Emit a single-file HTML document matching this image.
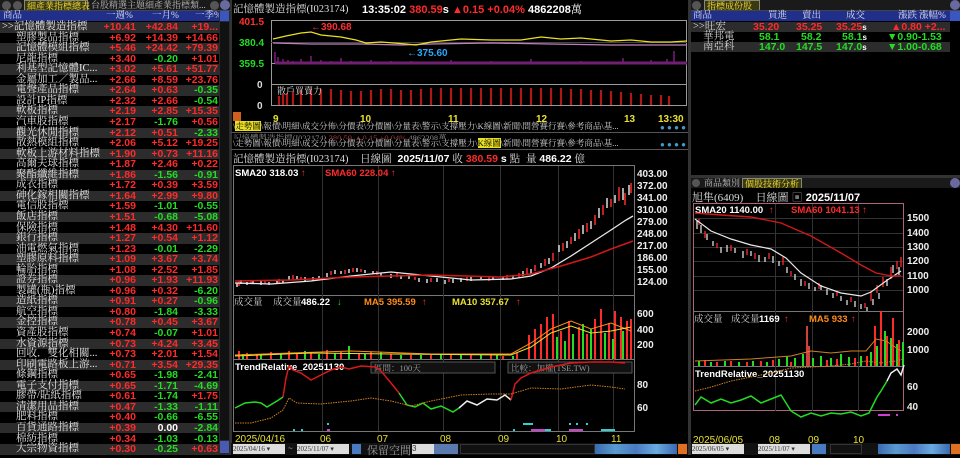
<!DOCTYPE html>
<html><head><meta charset="utf-8"><style>
*{margin:0;padding:0;box-sizing:border-box}
body{width:960px;height:455px;background:#000;overflow:hidden;position:relative;font-family:"Liberation Sans","Noto Serif CJK SC",sans-serif;color:#ddd}
.a{position:absolute;white-space:nowrap}
.r{color:#ff2a2a}.g{color:#22dd22}.w{color:#fff}.y{color:#e8e030}.o{color:#ff8c1a}
.b{font-weight:bold}
.cj{font-family:"Liberation Serif","Noto Serif CJK SC",serif}
.row{position:absolute;left:0;width:219px;height:10.55px;font-size:10.5px;line-height:10.55px}
.row.s{background:#2c2c2c}
.row span{position:absolute;top:0;white-space:nowrap}
.n{left:16px;color:#e8e8e8;font-family:"Liberation Serif","Noto Serif CJK SC",serif;font-size:10.5px}
.c1,.c2,.c3{font-weight:bold;text-align:right;width:60px}
.c1{left:76px}.c2{left:118px}.c3{left:158px}
.tab{position:absolute;height:10px;font-size:9px;line-height:10px;color:#bbb;white-space:nowrap;padding:0 2px}
.hdr{position:absolute;height:10px;background:#1f2f8a;font-size:9.5px;line-height:10px;color:#dde}
.tb{position:absolute;font-size:8.5px;line-height:9px;color:#ccc;font-family:"Liberation Serif","Noto Serif CJK SC",serif;white-space:nowrap}
</style></head><body>

<!-- LEFT PANEL -->
<div class="a" style="left:0;top:0;width:230px;height:11px;background:#1a1a1a;border-bottom:1px solid #444"></div>
<div class="a" style="left:2px;top:1px;width:9px;height:9px;border-radius:50%;background:#555"></div>
<div class="a" style="left:13px;top:1px;width:9px;height:9px;border-radius:50%;background:#555"></div>
<div class="tab cj" style="left:24px;top:0;width:64px;background:#3a3a10;color:#ffe640;border:1px solid #887;border-bottom:none">細產業指標總表</div>
<div class="tab cj" style="left:89px;top:0">台股精選主題</div>
<div class="tab cj" style="left:143px;top:0">細產業指標類...</div>
<div class="a" style="left:210px;top:1px;width:9px;height:9px;border-radius:50%;background:#555"></div>
<div class="a" style="left:220px;top:0px;width:10px;height:10px;border-radius:50%;background:#6a6aa0"></div>
<div class="hdr cj" style="left:0;top:11px;width:219px"><span class="a" style="left:3px">商品</span><span class="a" style="left:106px">一週%</span><span class="a" style="left:152px">一月%</span><span class="a" style="left:195px">一季%</span></div>
<div class="a" style="left:219px;top:11px;width:11px;height:444px;background:#2a2a2a"></div>
<div class="a" style="left:220px;top:11px;width:9px;height:10px;background:#3a56c0"></div>
<div class="a" style="left:220px;top:22px;width:9px;height:418px;background:#111"></div>
<div class="a" style="left:220px;top:441px;width:9px;height:12px;background:#4a5ab0"></div>

<div class="row s" style="top:22px"><span class="n" style="left:2px">&gt;&gt;記憶體製造指標</span><span class="c1 r">+10.41</span><span class="c2 r">+42.84</span><span class="c3 r">+19...</span></div>
<div class="row" style="top:32.5px"><span class="n">塑膠製品指標</span><span class="c1 r">+6.92</span><span class="c2 r">+14.39</span><span class="c3 r">+14.66</span></div>
<div class="row s" style="top:43.1px"><span class="n">記憶體模組指標</span><span class="c1 r">+5.46</span><span class="c2 r">+24.42</span><span class="c3 r">+79.39</span></div>
<div class="row" style="top:53.6px"><span class="n">尼龍指標</span><span class="c1 r">+3.40</span><span class="c2 g">-0.20</span><span class="c3 r">+1.01</span></div>
<div class="row s" style="top:64.2px"><span class="n">利基型記憶體IC...</span><span class="c1 r">+3.02</span><span class="c2 r">+5.61</span><span class="c3 r">+51.77</span></div>
<div class="row" style="top:74.7px"><span class="n">金屬加工／製品...</span><span class="c1 r">+2.66</span><span class="c2 r">+8.59</span><span class="c3 r">+23.76</span></div>
<div class="row s" style="top:85.3px"><span class="n">電聲產品指標</span><span class="c1 r">+2.64</span><span class="c2 r">+0.63</span><span class="c3 g">-0.35</span></div>
<div class="row" style="top:95.8px"><span class="n">設計IP指標</span><span class="c1 r">+2.32</span><span class="c2 r">+2.66</span><span class="c3 g">-0.54</span></div>
<div class="row s" style="top:106.4px"><span class="n">軟板指標</span><span class="c1 r">+2.19</span><span class="c2 r">+2.85</span><span class="c3 r">+15.35</span></div>
<div class="row" style="top:117px"><span class="n">汽車股指標</span><span class="c1 r">+2.17</span><span class="c2 g">-1.76</span><span class="c3 r">+0.56</span></div>
<div class="row s" style="top:127.5px"><span class="n">觀光休閒指標</span><span class="c1 r">+2.12</span><span class="c2 r">+0.51</span><span class="c3 g">-2.33</span></div>
<div class="row" style="top:138px"><span class="n">散熱模組指標</span><span class="c1 r">+2.06</span><span class="c2 r">+5.12</span><span class="c3 r">+19.25</span></div>
<div class="row s" style="top:148.6px"><span class="n">軟板上游材料指標</span><span class="c1 r">+1.90</span><span class="c2 r">+0.73</span><span class="c3 r">+11.16</span></div>
<div class="row" style="top:159.2px"><span class="n">高爾夫球指標</span><span class="c1 r">+1.87</span><span class="c2 r">+2.46</span><span class="c3 r">+0.22</span></div>
<div class="row s" style="top:169.7px"><span class="n">聚酯纖維指標</span><span class="c1 r">+1.86</span><span class="c2 g">-1.56</span><span class="c3 g">-0.91</span></div>
<div class="row" style="top:180.3px"><span class="n">成衣指標</span><span class="c1 r">+1.72</span><span class="c2 r">+0.39</span><span class="c3 r">+3.59</span></div>
<div class="row s" style="top:190.8px"><span class="n">砷化鎵相關指標</span><span class="c1 r">+1.64</span><span class="c2 r">+2.99</span><span class="c3 r">+9.80</span></div>
<div class="row" style="top:201.4px"><span class="n">電信股指標</span><span class="c1 r">+1.59</span><span class="c2 g">-1.01</span><span class="c3 g">-0.55</span></div>
<div class="row s" style="top:211.9px"><span class="n">飯店指標</span><span class="c1 r">+1.51</span><span class="c2 g">-0.68</span><span class="c3 g">-5.08</span></div>
<div class="row" style="top:222.5px"><span class="n">保險指標</span><span class="c1 r">+1.48</span><span class="c2 r">+4.30</span><span class="c3 r">+11.60</span></div>
<div class="row s" style="top:233px"><span class="n">銀行指標</span><span class="c1 r">+1.27</span><span class="c2 r">+0.54</span><span class="c3 r">+1.12</span></div>
<div class="row" style="top:243.6px"><span class="n">油電燃氣指標</span><span class="c1 r">+1.23</span><span class="c2 g">-0.01</span><span class="c3 g">-2.29</span></div>
<div class="row s" style="top:254.1px"><span class="n">塑膠原料指標</span><span class="c1 r">+1.09</span><span class="c2 r">+3.67</span><span class="c3 r">+3.74</span></div>
<div class="row" style="top:264.7px"><span class="n">輪胎指標</span><span class="c1 r">+1.08</span><span class="c2 r">+2.52</span><span class="c3 r">+1.85</span></div>
<div class="row s" style="top:275.2px"><span class="n">證券指標</span><span class="c1 r">+0.96</span><span class="c2 r">+1.93</span><span class="c3 r">+11.93</span></div>
<div class="row" style="top:285.8px"><span class="n">製罐(瓶)指標</span><span class="c1 r">+0.96</span><span class="c2 r">+0.32</span><span class="c3 g">-6.20</span></div>
<div class="row s" style="top:296.3px"><span class="n">造紙指標</span><span class="c1 r">+0.91</span><span class="c2 r">+0.27</span><span class="c3 g">-0.96</span></div>
<div class="row" style="top:306.9px"><span class="n">航空指標</span><span class="c1 r">+0.80</span><span class="c2 g">-1.84</span><span class="c3 g">-3.33</span></div>
<div class="row s" style="top:317.4px"><span class="n">金控指標</span><span class="c1 r">+0.78</span><span class="c2 r">+0.45</span><span class="c3 r">+3.67</span></div>
<div class="row" style="top:328px"><span class="n">資產股指標</span><span class="c1 r">+0.74</span><span class="c2 g">-0.07</span><span class="c3 r">+1.01</span></div>
<div class="row s" style="top:338.5px"><span class="n">水資源指標</span><span class="c1 r">+0.73</span><span class="c2 r">+4.24</span><span class="c3 r">+3.45</span></div>
<div class="row" style="top:349.1px"><span class="n">回收．雙化相關...</span><span class="c1 r">+0.73</span><span class="c2 r">+2.01</span><span class="c3 r">+1.54</span></div>
<div class="row s" style="top:359.6px"><span class="n">印刷電路板上游...</span><span class="c1 r">+0.71</span><span class="c2 r">+3.54</span><span class="c3 r">+29.35</span></div>
<div class="row" style="top:370.2px"><span class="n">條鋼指標</span><span class="c1 r">+0.65</span><span class="c2 g">-1.98</span><span class="c3 g">-2.41</span></div>
<div class="row s" style="top:380.7px"><span class="n">電子支付指標</span><span class="c1 r">+0.65</span><span class="c2 g">-1.71</span><span class="c3 g">-4.69</span></div>
<div class="row" style="top:391.3px"><span class="n">膠帶/貼紙指標</span><span class="c1 r">+0.61</span><span class="c2 g">-1.74</span><span class="c3 r">+1.75</span></div>
<div class="row s" style="top:401.8px"><span class="n">清潔用品指標</span><span class="c1 r">+0.47</span><span class="c2 g">-1.33</span><span class="c3 g">-1.11</span></div>
<div class="row" style="top:412.4px"><span class="n">肥料指標</span><span class="c1 r">+0.40</span><span class="c2 g">-0.66</span><span class="c3 g">-6.55</span></div>
<div class="row s" style="top:422.9px"><span class="n">百貨通路指標</span><span class="c1 r">+0.39</span><span class="c2 w">0.00</span><span class="c3 g">-2.84</span></div>
<div class="row" style="top:433.5px"><span class="n">棉紡指標</span><span class="c1 r">+0.34</span><span class="c2 g">-1.03</span><span class="c3 g">-0.13</span></div>
<div class="row s" style="top:444px"><span class="n">大宗物資指標</span><span class="c1 r">+0.30</span><span class="c2 g">-0.25</span><span class="c3 r">+0.63</span></div>

<!-- dividers -->
<div class="a" style="left:230px;top:0;width:2px;height:455px;background:#333"></div>
<div class="a" style="left:688px;top:0;width:3px;height:455px;background:#333"></div>

<!-- MIDDLE TOP -->
<div class="a cj" style="left:233px;top:1px;font-size:10.5px;color:#ddd">記憶體製造指標(I023174)</div>
<div class="a b" style="left:362px;top:1px;font-size:11px"><span class="w">13:35:02</span> <span class="r">380.59</span><span class="w">s</span> <span class="r">▲0.15 +0.04%</span> <span class="w">4862208<span class="cj" style="font-weight:normal">萬</span></span></div>
<svg class="a" style="left:231px;top:14px" width="457" height="110">
<rect x="40.5" y="6.5" width="415" height="85" fill="none" stroke="#999"/>
<line x1="40" y1="49.5" x2="456" y2="49.5" stroke="#999"/>
<line x1="40" y1="70.5" x2="456" y2="70.5" stroke="#999"/>
<line x1="40" y1="28.5" x2="456" y2="28.5" stroke="#444"/>
<g font-family="Liberation Sans" font-weight="bold" font-size="10">
<text x="8" y="11" fill="#ff3030">401.5</text>
<text x="8" y="32" fill="#22dd22">380.4</text>
<text x="8" y="53" fill="#22dd22">359.5</text>
<text x="26" y="74" fill="#ddd">0</text>
<text x="26" y="95" fill="#ddd">0</text>
<text x="80" y="16" fill="#ff3030">←390.68</text>
<text x="176" y="42" fill="#29a8ff">←375.60</text>
</g>
<polyline fill="none" stroke="#c080c0" stroke-width="1.3" points="42,29 80,30 130,30 170,31 200,30 260,29 320,30 380,31 440,31 456,31"/>
<polyline fill="none" stroke="#e8e020" stroke-width="1.3" points="42,25 55,22 70,19 80,18 90,21 110,23 125,26 135,29 150,28 175,30 185,31 200,28 230,25 260,26 290,26 310,23 330,25 350,24 380,27 400,26 420,28 440,28 456,27"/>
<path d="M44 49V38M47 49V43M52 49V45M57 49V46M62 49V47M70 49V45M80 49V42M90 49V46M100 49V47M110 49V44M120 49V47M140 49V46M160 49V47M180 49V47M220 49V46M260 49V47M300 49V45M350 49V47M392 49V44M420 49V46M436 49V45M443 49V37" stroke="#a020a0" stroke-width="1.2"/>
<path d="M44 49H456" stroke="#702070" stroke-width="3"/>
<g stroke="#b01818" stroke-width="2.2">
<path d="M48 91V82M52 91V80M56 91V79M62 91V78M70 91V76M80 91V75M90 91V75M100 91V75M110 91V76M120 91V77M130 91V77M140 91V76M150 91V75M160 91V75M170 91V76M180 91V76M190 91V75M200 91V74M210 91V74M220 91V74M230 91V74M240 91V74M250 91V74M260 91V74M270 91V74M280 91V74M290 91V74M300 91V74M310 91V74M320 91V74M330 91V74M340 91V75M350 91V75M360 91V76M370 91V76M380 91V77M390 91V78M400 91V79M410 91V80M420 91V81M430 91V81M438 91V82"/>
</g>
<text x="46" y="80" fill="#ddd" font-size="9" font-family="Liberation Serif,Noto Serif CJK SC,serif">散戶買賣力</text>
<g font-family="Liberation Sans" font-weight="bold" font-size="10" fill="#e8e030">
<text x="42" y="108">9</text><text x="129" y="108">10</text><text x="217" y="108">11</text><text x="305" y="108">12</text><text x="393" y="108">13</text><text x="427" y="108">13:30</text>
</g>
<rect x="2" y="98" width="8" height="9" fill="#d06020"/>
</svg>
<div class="tb" style="left:233px;top:122px">\<span style="background:#e8e020;color:#000">走勢圖</span>\報價\明細\成交分佈\分價表\分價圖\分量表\警示\支撐壓力\K線圖\新聞\間營賽行賽\參考商品\基...</div>
<div class="a" style="left:660px;top:123px;font-size:8px;color:#49c">● ● ● ●</div>
<div class="a" style="left:231px;top:132px;width:457px;height:1px;background:#555"></div>
<div class="tb" style="left:233px;top:134px;color:#888">記憶體製造指標(I023174) <span style="color:#a33">380.59 ▲0.15 +0.04%</span> 4862208萬</div>
<div class="tb" style="left:233px;top:139px;background:#000">\走勢圖\報價\明細\成交分佈\分價表\分價圖\分量表\警示\支撐壓力\<span style="background:#e8e020;color:#000">K線圖</span>\新聞\間營賽行賽\參考商品\基...</div>
<div class="a" style="left:660px;top:140px;font-size:8px;color:#49c">● ● ● ●</div>
<div class="a" style="left:231px;top:149px;width:457px;height:1px;background:#555"></div>
<div class="a" style="left:233px;top:151px;font-size:10.5px"><span class="cj">記憶體製造指標(I023174)</span>&nbsp;&nbsp;&nbsp;&nbsp;<span class="cj">日線圖</span>&nbsp;&nbsp;<b class="w">2025/11/07</b> <span class="cj">收</span> <b class="r">380.59</b> <b class="w">s</b> <span class="cj">點</span>&nbsp; <span class="cj">量</span> <b class="w">486.22</b> <span class="cj">億</span></div>

<!-- MIDDLE MAIN CHART -->
<svg class="a" style="left:231px;top:163px" width="457" height="292" font-family="Liberation Sans" font-weight="bold">
<rect x="2.5" y="2.5" width="401" height="266" fill="none" stroke="#777"/>
<line x1="2" y1="132.5" x2="404" y2="132.5" stroke="#777"/>
<line x1="2" y1="196.5" x2="404" y2="196.5" stroke="#777"/>
<g stroke="#333"><path d="M91.5 3V268M147.5 3V268M212.5 3V268M269.5 3V268M327.5 3V268M382.5 3V268"/></g>
<g font-size="9.5" fill="#fff"><text x="4" y="13">SMA20 318.03</text><text x="70" y="13" fill="#ff2a2a">↑</text><text x="94" y="13" fill="#ff2a2a">SMA60 228.04 ↑</text></g>
<g font-size="10" fill="#eee">
<text x="406" y="14">403.00</text><text x="406" y="26">372.00</text><text x="406" y="38">341.00</text><text x="406" y="50">310.00</text><text x="406" y="62">279.00</text><text x="406" y="74">248.00</text><text x="406" y="86">217.00</text><text x="406" y="98">186.00</text><text x="406" y="110">155.00</text><text x="406" y="122">124.00</text>
<text x="406" y="154">600</text><text x="406" y="170">400</text><text x="406" y="185">200</text>
<text x="406" y="225">80</text><text x="406" y="248">60</text>
</g>
<g stroke="#ddd" stroke-width="1.5">
<path d="M6 120v4M10 117v4M16 119v3M22 118v3M30 118v4M38 119v3M46 117v4M52 117v3M58 113v4M66 113v3M74 114v4M82 114v4M88 113v3M96 110v4M104 107v4M110 108v3M118 106v4M126 105v4M134 107v3M142 108v3M150 110v4M160 111v4M170 112v4M178 113v3M188 115v4M196 116v4M206 115v4M214 117v4M222 116v4M230 115v4M240 114v4M250 113v3M262 114v3M272 113v4M282 112v4M292 108v5M300 106v5M310 100v5M318 95v6M328 82v7M336 78v7M344 70v8M352 62v9M360 58v8M368 45v10M376 35v10M384 32v8M392 25v12M398 22v10"/>
</g>
<g stroke="#ff2a2a" stroke-width="1.5">
<path d="M8 118v5M20 117v4M34 118v3M48 116v4M62 112v4M70 114v3M100 108v4M114 107v4M122 105v4M130 106v3M146 108v4M166 110v4M184 114v3M200 115v4M218 116v3M236 114v4M258 114v4M276 112v4M288 110v5M296 105v6M304 102v6M314 96v7M322 90v8M332 80v8M340 74v7M348 66v10M356 60v9M364 52v10M372 42v10M380 36v8M388 24v14M394 30v12M400 20v10"/>
</g>
<polyline fill="none" stroke="#e8e8e8" stroke-width="1.3" points="4,120 40,121 80,118 120,113 160,109 200,113 240,117 280,116 300,113 320,105 340,93 360,80 380,67 395,57 402,53"/>
<polyline fill="none" stroke="#d01818" stroke-width="1.5" points="4,118 60,117 120,114 200,112 270,114 300,111 330,103 360,94 380,86 402,78"/>
<g font-size="9.5"><text x="3" y="142" fill="#ccc" font-weight="normal" font-family="Liberation Serif,Noto Serif CJK SC,serif">成交量</text><text x="42" y="142" fill="#ccc" font-weight="normal" font-family="Liberation Serif,Noto Serif CJK SC,serif">成交量</text><text x="70" y="142" fill="#fff">486.22</text><text x="106" y="142" fill="#22dd22">↓</text><text x="133" y="142" fill="#ff8c1a">MA5 395.59</text><text x="191" y="142" fill="#ff2a2a">↑</text><text x="221" y="142" fill="#e8e030">MA10 357.67</text><text x="285" y="142" fill="#ff2a2a">↑</text></g>
<g stroke="#ff2a2a" stroke-width="2"><path d="M8 196v-8M16 196v-6M26 196v-5M40 196v-7M58 196v-8M66 196v-5M80 196v-6M96 196v-9M110 196v-7M128 196v-6M140 196v-7M160 196v-5M180 196v-4M200 196v-4M220 196v-5M240 196v-4M260 196v-5M272 196v-3M286 196v-6M298 196v-24M304 196v-30M310 196v-35M316 196v-42M322 196v-45M330 196v-28M338 196v-38M348 196v-32M356 196v-25M364 196v-40M370 196v-50M378 196v-36M384 196v-48M390 196v-42M396 196v-38M400 196v-40"/></g>
<g stroke="#22dd22" stroke-width="2"><path d="M12 196v-5M30 196v-4M50 196v-6M74 196v-8M88 196v-5M104 196v-6M118 196v-13M134 196v-5M150 196v-7M170 196v-4M190 196v-4M210 196v-5M230 196v-4M250 196v-4M266 196v-4M282 196v-3M326 196v-22M334 196v-18M342 196v-25M352 196v-35M360 196v-30M374 196v-26M382 196v-20M392 196v-28"/></g>
<polyline fill="none" stroke="#ff8c1a" stroke-width="1" points="4,192 60,190 120,188 200,191 280,191 300,180 320,166 340,158 360,166 380,160 400,168"/>
<polyline fill="none" stroke="#e8e030" stroke-width="1" points="4,193 80,190 160,191 280,192 300,184 320,170 340,163 360,170 380,168 400,164"/>
<text x="4" y="207" font-size="9.5" fill="#fff">TrendRelative_20251130</text>
<rect x="140" y="199" width="124" height="11" fill="#111" stroke="#555"/>
<text x="143" y="208" font-size="8.5" fill="#999" font-weight="normal" font-family="Liberation Serif,Noto Serif CJK SC,serif">區間：100天</text>
<rect x="277" y="199" width="124" height="11" fill="#111" stroke="#555"/>
<text x="280" y="208" font-size="8.5" fill="#999" font-weight="normal" font-family="Liberation Serif,Noto Serif CJK SC,serif">比較：加權(TSE.TW)</text>
<polyline fill="none" stroke="#22dd22" stroke-width="1.5" points="4,245 14,240 24,239 30,240 36,244 46,238 52,234"/>
<polyline fill="none" stroke="#dd1818" stroke-width="1.5" points="52,234 55,215 58,203 62,207 70,210 80,217 90,212 100,207 110,204 118,206 130,203 145,204 150,208 160,220 168,230"/>
<polyline fill="none" stroke="#22dd22" stroke-width="1.5" points="168,230 176,242 184,244 192,240 200,246 210,243 222,249 228,245"/>
<polyline fill="none" stroke="#eee" stroke-width="1.5" points="228,245 236,238 246,242 256,236 266,237 274,232 280,237"/>
<polyline fill="none" stroke="#dd1818" stroke-width="1.5" points="280,237 284,221 290,215 300,210 320,204 340,200 360,199 380,199 394,200"/>
<polyline fill="none" stroke="#d08020" stroke-width="1" stroke-dasharray="1.5,1" points="4,260 20,260 40,255 52,247 58,235 66,240 90,241 120,238 140,235 160,238 180,243 200,238 230,232 260,231 280,231 290,228 300,225 330,226 360,222 380,224 394,226"/>
<g fill="#30d0d0"><rect x="96" y="260" width="2" height="2"/><rect x="62" y="266" width="2" height="2"/><rect x="70" y="266" width="2" height="2"/><rect x="282" y="266" width="2" height="2"/><rect x="292" y="260" width="10" height="2"/><rect x="338" y="260" width="2" height="2"/><rect x="345" y="260" width="2" height="2"/><rect x="355" y="260" width="2" height="2"/><rect x="300" y="266" width="20" height="2"/><rect x="370" y="266" width="14" height="2"/></g>
<g fill="#d040d0"><rect x="96" y="266" width="3" height="2"/><rect x="300" y="266" width="14" height="2"/><rect x="338" y="266" width="14" height="2"/></g>
<g font-size="10" fill="#e8e030" font-weight="normal"><text x="4" y="279">2025/04/16</text><text x="89" y="279">06</text><text x="146" y="279">07</text><text x="209" y="279">08</text><text x="267" y="279">09</text><text x="325" y="279">10</text><text x="380" y="279">11</text></g>
</svg>
<div class="a" style="left:231px;top:443px;width:457px;height:12px;background:#111"></div>
<div class="a" style="left:233px;top:444px;width:52px;height:10px;background:#ddd;font-size:7px;color:#333;line-height:10px;font-family:'Liberation Serif',serif">2025/04/16 ▾</div>
<div class="a" style="left:288px;top:444px;font-size:8px;color:#aaa">~</div>
<div class="a" style="left:297px;top:444px;width:52px;height:10px;background:#ddd;font-size:7px;color:#333;line-height:10px;font-family:'Liberation Serif',serif">2025/11/07 ▾</div>
<div class="a" style="left:352px;top:444px;width:9px;height:10px;background:#4a7ac0"></div>
<div class="a cj" style="left:367px;top:442px;font-size:11px;color:#999">保留空間</div>
<div class="a" style="left:412px;top:444px;width:22px;height:10px;background:#ddd;font-size:8px;color:#333;line-height:10px">3</div>
<div class="a" style="left:434px;top:444px;width:24px;height:10px;background:#5a7ab0"></div>
<div class="a" style="left:460px;top:444px;width:135px;height:10px;background:#111;border:1px solid #333"></div>
<div class="a" style="left:595px;top:444px;width:82px;height:10px;background:linear-gradient(90deg,#3a6ab0,#5a9ad0,#4a7ac0,#6aaae0,#3a6ab0)"></div>
<div class="a" style="left:678px;top:444px;width:9px;height:10px;background:#e07020"></div>

<!-- RIGHT TOP -->
<div class="a" style="left:691px;top:0;width:269px;height:11px;background:#1a1a1a;border-bottom:1px solid #444"></div>
<div class="a" style="left:692px;top:1px;width:9px;height:9px;border-radius:50%;background:#555"></div>
<div class="tab cj" style="left:704px;top:0;width:56px;background:#3a3a10;color:#ffe640;border:1px solid #887;border-bottom:none">指標成份股</div>
<div class="a" style="left:950px;top:0;width:10px;height:10px;border-radius:50%;background:#6a6aa0"></div>
<div class="hdr cj" style="left:691px;top:11px;width:259px"><span class="a" style="left:2px">商品</span><span class="a" style="left:77px">買進</span><span class="a" style="left:111px">賣出</span><span class="a" style="left:155px">成交</span><span class="a" style="left:207px">漲跌</span><span class="a" style="left:228px">漲幅%</span></div>
<div class="a" style="left:950px;top:11px;width:10px;height:10px;background:#3a56c0"></div>
<div class="a b" style="left:691px;top:22px;width:259px;height:10px;background:#2c2c2c;font-size:10.5px;line-height:10px"><span class="a cj" style="left:2px;font-weight:normal;color:#ddd">&gt;&gt;旺宏</span><span class="a r" style="left:62px">35.20</span><span class="a r" style="left:105px">35.25</span><span class="a r" style="left:145px">35.25<span class="w" style="font-size:8px">s</span></span><span class="a r" style="left:200px">▲0.80 +2...</span></div>
<div class="a b" style="left:691px;top:32px;width:259px;height:10px;font-size:10.5px;line-height:10px"><span class="a cj" style="left:12px;font-weight:normal;color:#ddd">華邦電</span><span class="a g" style="left:68px">58.1</span><span class="a g" style="left:110px">58.2</span><span class="a g" style="left:151px">58.1<span class="w" style="font-size:8px">s</span></span><span class="a g" style="left:196px">▼0.90-1.53</span></div>
<div class="a b" style="left:691px;top:42px;width:259px;height:10px;background:#2c2c2c;font-size:10.5px;line-height:10px"><span class="a cj" style="left:12px;font-weight:normal;color:#ddd">南亞科</span><span class="a g" style="left:68px">147.0</span><span class="a g" style="left:105px">147.5</span><span class="a g" style="left:145px">147.0<span class="w" style="font-size:8px">s</span></span><span class="a g" style="left:196px">▼1.00-0.68</span></div>
<div class="a" style="left:691px;top:175px;width:269px;height:3px;background:#333"></div>

<!-- RIGHT BOTTOM -->
<div class="a" style="left:691px;top:178px;width:269px;height:10px;background:#1a1a1a"></div>
<div class="a" style="left:692px;top:179px;width:8px;height:8px;border-radius:50%;background:#555"></div>
<div class="tab cj" style="left:702px;top:178px">商品類別</div>
<div class="tab cj" style="left:742px;top:178px;width:60px;background:#3a3a10;color:#ffe640;border:1px solid #887;border-bottom:none">個股技術分析</div>
<div class="a" style="left:950px;top:178px;width:10px;height:10px;border-radius:50%;background:#6a6aa0"></div>
<div class="a" style="left:692px;top:189px;font-size:11px"><span class="cj">旭隼(6409)</span>&nbsp;&nbsp;&nbsp;&nbsp;<span class="cj">日線圖</span> <span style="color:#777">▣</span> <b class="w">2025/11/07</b></div>
<svg class="a" style="left:691px;top:201px" width="269" height="254" font-family="Liberation Sans" font-weight="bold">
<rect x="2.5" y="2.5" width="210" height="207" fill="none" stroke="#aa6677"/>
<line x1="2" y1="110.5" x2="213" y2="110.5" stroke="#777"/>
<line x1="2" y1="165.5" x2="213" y2="165.5" stroke="#777"/>
<g stroke="#333"><path d="M84.5 3V210M121.5 3V210M167.5 3V210M3 17.5H212M3 32.5H212M3 46.5H212M3 60.5H212M3 75.5H212M3 89.5H212"/></g>
<g font-size="9.5"><text x="4" y="12" fill="#fff">SMA20 1140.00</text><text x="78" y="12" fill="#ff2a2a">↑</text><text x="100" y="12" fill="#ff2a2a">SMA60 1041.13 ↑</text></g>
<g font-size="10" fill="#eee"><text x="216" y="20">1500</text><text x="216" y="35">1400</text><text x="216" y="49">1300</text><text x="216" y="63">1200</text><text x="216" y="78">1100</text><text x="216" y="92">1000</text><text x="216" y="134">2000</text><text x="216" y="152">1000</text><text x="216" y="189">60</text><text x="216" y="209">40</text></g>
<g stroke="#ddd" stroke-width="1.3"><path d="M6 20v8M10 24v8M16 33v6M22 40v5M30 46v6M36 44v7M44 47v5M52 50v7M60 50v5M68 54v7M74 56v5M82 55v7M88 60v5M96 66v6M104 73v6M110 78v7M118 82v6M124 86v4M130 84v5M136 88v6M142 92v5M150 95v5M156 99v5M164 100v6M170 103v5M176 106v4M182 98v6M188 92v6M196 78v7M202 64v8M208 66v8"/></g>
<g stroke="#ff2a2a" stroke-width="1.3"><path d="M8 18v6M14 30v7M26 42v5M40 44v6M56 48v6M64 52v6M78 52v6M92 56v8M100 70v5M114 80v5M128 82v6M146 90v5M160 96v5M174 102v5M180 90v10M186 84v8M192 76v10M200 66v12M206 60v8M210 56v10"/></g>
<polyline fill="none" stroke="#e8e8e8" stroke-width="1.2" points="4,18 20,30 40,38 60,44 80,48 95,57 110,72 130,85 150,92 170,95 180,91 195,80 210,70"/>
<polyline fill="none" stroke="#d01818" stroke-width="1.4" points="4,12 30,14 60,16 90,22 120,35 150,52 170,64 185,72 200,75 210,75"/>
<g font-size="9.5"><text x="3" y="121" fill="#ccc" font-weight="normal" font-family="Liberation Serif,Noto Serif CJK SC,serif">成交量</text><text x="40" y="121" fill="#ccc" font-weight="normal" font-family="Liberation Serif,Noto Serif CJK SC,serif">成交量</text><text x="68" y="121" fill="#fff">1169</text><text x="93" y="121" fill="#ff2a2a">↑</text><text x="118" y="121" fill="#ff8c1a">MA5 933</text><text x="160" y="121" fill="#ff2a2a">↑</text></g>
<g stroke="#22dd22" stroke-width="2"><path d="M8 165v-5M20 165v-4M34 165v-5M48 165v-4M62 165v-5M76 165v-4M88 165v-7M96 165v-10M104 165v-8M112 165v-12M122 165v-8M130 165v-10M140 165v-8M150 165v-12M158 165v-9M170 165v-10M180 165v-14M186 165v-20M194 165v-35M200 165v-28M206 165v-22M212 165v-24"/></g>
<g stroke="#ff2a2a" stroke-width="2"><path d="M14 165v-6M26 165v-4M40 165v-5M56 165v-4M70 165v-5M82 165v-6M100 165v-4M118 165v-8M136 165v-6M146 165v-7M164 165v-8M176 165v-10M184 165v-40M190 165v-55M196 165v-30M202 165v-48M208 165v-26"/></g>
<g stroke="#d04040" stroke-width="2"><path d="M116 165v-40M118 165v-20"/></g>
<polyline fill="none" stroke="#d08020" stroke-width="1" points="4,160 60,158 100,155 120,150 140,152 160,150 175,150 185,138 195,140 210,150"/>
<text x="4" y="176" font-size="9.5" fill="#fff">TrendRelative_20251130</text>
<polyline fill="none" stroke="#d08020" stroke-width="1" stroke-dasharray="1.5,1" points="4,190 20,186 40,180 60,176 80,172 100,167 120,166 140,165 160,163 175,160 190,162 205,160 212,158"/>
<polyline fill="none" stroke="#22dd22" stroke-width="1.5" points="4,204 10,196 20,202 30,198 40,202 50,199 60,195 70,202 80,198 90,194 100,210 110,216 120,212 130,215 140,212 150,213 160,211 170,215 178,212 182,204 186,196 190,190 196,180"/>
<polyline fill="none" stroke="#eee" stroke-width="1.5" points="196,180 200,172 206,168 210,174 213,164"/>
<g fill="#d040d0"><rect x="187" y="213" width="12" height="2"/><rect x="205" y="213" width="2" height="2"/></g>
<g font-size="10" fill="#e8e030" font-weight="normal"><text x="2" y="242">2025/06/05</text><text x="78" y="242">08</text><text x="117" y="242">09</text><text x="162" y="242">10</text></g>
</svg>
<div class="a" style="left:691px;top:443px;width:269px;height:12px;background:#111"></div>
<div class="a" style="left:692px;top:444px;width:52px;height:10px;background:#ddd;font-size:7px;color:#333;line-height:10px;font-family:'Liberation Serif',serif">2025/06/05 ▾</div>
<div class="a" style="left:758px;top:444px;width:52px;height:10px;background:#ddd;font-size:7px;color:#333;line-height:10px;font-family:'Liberation Serif',serif">2025/11/07 ▾</div>
<div class="a" style="left:812px;top:444px;width:14px;height:10px;background:#4a7ac0"></div>
<div class="a" style="left:830px;top:444px;width:32px;height:10px;background:#111;border:1px solid #333"></div>
<div class="a" style="left:878px;top:444px;width:72px;height:10px;background:linear-gradient(90deg,#3a6ab0,#5a9ad0,#4a7ac0,#6aaae0,#3a6ab0)"></div>
<div class="a" style="left:951px;top:444px;width:9px;height:10px;background:#e07020"></div>
</body></html>
